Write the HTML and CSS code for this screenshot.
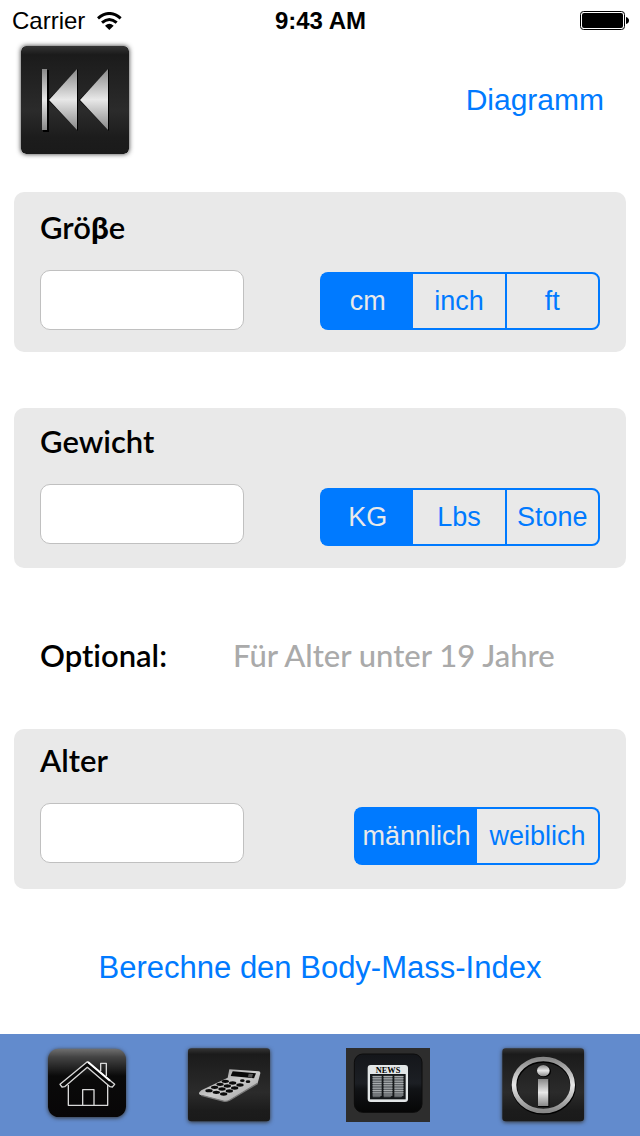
FILE: index.html
```html
<!DOCTYPE html>
<html lang="de">
<head>
    <meta charset="UTF-8">
    <meta name="viewport" content="width=device-width, initial-scale=1.0">
    <title>Body-Mass-Index</title>
    <link rel="stylesheet" href="styles.css">
</head>
<body>
    <div class="status-bar">
        <div class="carrier">
            <span>Carrier</span>
            <svg class="wifi" viewBox="0 0 75 57" aria-hidden="true">
                <g fill="none" stroke="#000" stroke-width="9">
                    <path d="M3 19Q37-10 71 19"/>
                    <path d="M15 32Q37 13 59 32"/>
                </g>
                <path d="M24 41Q37 30 50 41L37 54Z"/>
            </svg>
        </div>
        <span class="clock">9:43 AM</span>
        <svg class="battery" viewBox="0 0 49 20" aria-hidden="true">
            <rect x="0.5" y="0.5" width="44" height="18" rx="3" fill="#fff" stroke="#000"/>
            <rect x="2" y="2" width="41" height="15" rx="2"/>
            <path d="M46 6Q49 7 49 9.500Q49 12 46 13Z"/>
        </svg>
    </div>

    <header class="top-bar">
        <button class="back-button" type="button" aria-label="Zurück">
            <svg viewBox="0 0 108 108" aria-hidden="true">
                <defs>
                    <linearGradient id="tile" x1="0" y1="0" x2="0" y2="1">
                        <stop offset="0" stop-color="#343434"/>
                        <stop offset="0.08" stop-color="#1b1b1b"/>
                        <stop offset="0.6" stop-color="#2b2b2b"/>
                        <stop offset="0.85" stop-color="#1c1c1c"/>
                        <stop offset="1" stop-color="#1a1a1a"/>
                    </linearGradient>
                    <linearGradient id="metal" x1="0" y1="0" x2="0" y2="1">
                        <stop offset="0" stop-color="#888"/>
                        <stop offset="0.5" stop-color="#e8e8e8"/>
                        <stop offset="1" stop-color="#888"/>
                    </linearGradient>
                </defs>
                <rect width="108" height="108" rx="5" fill="url(#tile)"/>
                <g fill="#000">
                    <path d="M22 24H28V86H22Z"/>
                    <path d="M57 23V85L27 54Z"/>
                    <path d="M88 23V85L58 54Z"/>
                </g>
                <g fill="url(#metal)">
                    <path d="M21 23H26V84H21Z"/>
                    <path d="M56 23V84L28 54Z"/>
                    <path d="M87 23V84L59 54Z"/>
                </g>
            </svg>
        </button>
        <button class="link-button" type="button">Diagramm</button>
    </header>

    <main>
        <section class="card card-height">
            <label class="title" for="height">Grö<b>β</b>e</label>
            <div class="field-row">
                <input class="value" id="height" type="text" inputmode="decimal">
                <fieldset class="segments" aria-label="Einheit der Größe">
                    <label class="segment"><input type="radio" name="height-unit" checked><span>cm</span></label>
                    <label class="segment"><input type="radio" name="height-unit"><span>inch</span></label>
                    <label class="segment"><input type="radio" name="height-unit"><span>ft</span></label>
                </fieldset>
            </div>
        </section>

        <section class="card card-weight">
            <label class="title" for="weight">Gewicht</label>
            <div class="field-row">
                <input class="value" id="weight" type="text" inputmode="decimal">
                <fieldset class="segments" aria-label="Einheit des Gewichts">
                    <label class="segment"><input type="radio" name="weight-unit" checked><span>KG</span></label>
                    <label class="segment"><input type="radio" name="weight-unit"><span>Lbs</span></label>
                    <label class="segment"><input type="radio" name="weight-unit"><span>Stone</span></label>
                </fieldset>
            </div>
        </section>

        <div class="optional">
            <span class="title">Optional:</span>
            <span class="hint">Für Alter unter 19 Jahre</span>
        </div>

        <section class="card card-age">
            <label class="title" for="age">Alter</label>
            <div class="field-row">
                <input class="value" id="age" type="text" inputmode="numeric">
                <fieldset class="segments segments-two" aria-label="Geschlecht">
                    <label class="segment"><input type="radio" name="gender" checked><span>männlich</span></label>
                    <label class="segment"><input type="radio" name="gender"><span>weiblich</span></label>
                </fieldset>
            </div>
        </section>

        <button class="link-button calculate" type="button">Berechne den Body-Mass-Index</button>
    </main>

    <nav class="tab-bar">
        <a class="tab" href="#home" aria-label="Start">
            <svg viewBox="45 42 252 222" aria-hidden="true">
                <defs>
                    <linearGradient id="gloss" x1="0" y1="0" x2="0" y2="1">
                        <stop offset="0" stop-color="#707070"/>
                        <stop offset="0.12" stop-color="#444"/>
                        <stop offset="0.4" stop-color="#0a0a0a"/>
                        <stop offset="1" stop-color="#080607"/>
                    </linearGradient>
                </defs>
                <rect x="54" y="44" width="234" height="205" rx="32" fill="url(#gloss)"/>
                <g fill="none" stroke="#d8d8d8" stroke-width="4" stroke-linejoin="round">
                    <path d="M115 153V214H233V153"/>
                    <path d="M158 213V167H192V213"/>
                    <path d="M212 112V88H229V126"/>
                    <path d="M172 83L254 151L247 159L240 158L172 100L104 158L96 159L90 151Z" fill="#080808"/>
                </g>
                <path d="M174 84L240 140" stroke="#fff" stroke-width="6"/>
            </svg>
        </a>
        <a class="tab" href="#calculator" aria-label="Rechner">
            <svg viewBox="51 42 252 222" aria-hidden="true">
                <defs>
                    <linearGradient id="silver" x1="0" y1="0" x2="1" y2="1">
                        <stop offset="0" stop-color="#888"/>
                        <stop offset="0.5" stop-color="#ccc"/>
                        <stop offset="1" stop-color="#999"/>
                    </linearGradient>
                </defs>
                <rect x="54" y="43" width="246" height="219" rx="10" fill="url(#tile)"/>
                <path d="M178 106L266 112Q272 113 271 118L263 148L180 198Q172 203 163 202L94 184Q84 181 88 175L94 169L173 131Z" fill="url(#silver)"/>
                <path d="M263 148L180 198Q172 203 163 202L94 184" fill="none" stroke="#777" stroke-width="4"/>
                <path d="M188 112L258 118L252 133L182 126Z" fill="#090909"/>
                <path d="M236 119L249 120L246 131L234 129Z" fill="#555"/>
                <g fill="#0b0b0b">
                    <ellipse cx="166" cy="142" rx="11" ry="5"/>
                    <ellipse cx="188" cy="147" rx="11" ry="5"/>
                    <ellipse cx="210" cy="153" rx="11" ry="5"/>
                    <ellipse cx="150" cy="151" rx="11" ry="5"/>
                    <ellipse cx="172" cy="156" rx="11" ry="5"/>
                    <ellipse cx="194" cy="162" rx="11" ry="5"/>
                    <ellipse cx="134" cy="160" rx="11" ry="5"/>
                    <ellipse cx="156" cy="165" rx="11" ry="5"/>
                    <ellipse cx="178" cy="171" rx="11" ry="5"/>
                    <ellipse cx="117" cy="170" rx="11" ry="5"/>
                    <ellipse cx="139" cy="175" rx="11" ry="5"/>
                    <ellipse cx="161" cy="180" rx="11" ry="5"/>
                    <ellipse cx="217" cy="140" rx="7" ry="4"/>
                    <ellipse cx="234" cy="143" rx="7" ry="4"/>
                </g>
            </svg>
        </a>
        <a class="tab tab-flat" href="#news" aria-label="News">
            <svg viewBox="48 42 252 222" aria-hidden="true">
                <defs>
                    <linearGradient id="night" x1="0" y1="0" x2="0" y2="1">
                        <stop offset="0" stop-color="#14161a"/>
                        <stop offset="0.5" stop-color="#1c1f24"/>
                        <stop offset="0.6" stop-color="#111316"/>
                        <stop offset="1" stop-color="#060606"/>
                    </linearGradient>
                </defs>
                <rect x="48" y="42" width="252" height="222" fill="#2d2d2d"/>
                <rect x="73" y="60" width="203" height="175" rx="25" fill="url(#night)" stroke="#0c0c0c" stroke-width="3"/>
                <rect x="113" y="93" width="121" height="111" rx="9" fill="#e2e6e7"/>
                <rect x="120" y="120" width="107" height="76" fill="#15181a"/>
                <text class="paper-name" x="174" y="116">NEWS</text>
                <g fill="#606467">
                    <path d="M128 125H155V184L149 190H128Z"/>
                    <path d="M161 125H187V184L181 190H161Z"/>
                    <path d="M193 125H220V184L214 190H193Z"/>
                </g>
                <g stroke="#a8acae" stroke-width="27" stroke-dasharray="3 4">
                    <path d="M141 126V184"/>
                    <path d="M174 126V184"/>
                    <path d="M207 126V184"/>
                </g>
            </svg>
        </a>
        <a class="tab" href="#info" aria-label="Info">
            <svg viewBox="48 42 252 222" aria-hidden="true">
                <rect x="52" y="43" width="245" height="219" rx="10" fill="url(#tile)"/>
                <g fill="none">
                    <ellipse cx="176" cy="156" rx="88" ry="78" stroke="#000" stroke-width="17"/>
                    <ellipse cx="175" cy="153" rx="88" ry="78" stroke="url(#metal)" stroke-width="14"/>
                </g>
                <g fill="#000">
                    <ellipse cx="177" cy="112" rx="21" ry="18"/>
                    <path d="M159 136H193V219H159Z"/>
                </g>
                <g fill="url(#metal)">
                    <ellipse cx="175" cy="110" rx="19" ry="17"/>
                    <path d="M159 135H190V216H159Z"/>
                </g>
            </svg>
        </a>
    </nav>
</body>
</html>
```
FILE: styles.css
```css
* {
    box-sizing: border-box;
}

body {
    display: flex;
    flex-direction: column;
    min-height: 100vh;
    margin: 0;
    background: #fff;
    color: #000;
    font-family: "Liberation Sans", Arial, sans-serif;
    font-size: 27px;
}

button {
    padding: 0;
    border: none;
    background: none;
    cursor: pointer;
}

svg {
    display: block;
}

/* status bar */
.status-bar {
    display: grid;
    grid-template-columns: 1fr auto 1fr;
    align-items: center;
    height: 40px;
    padding: 2px 11px 0 12px;
    font-size: 24px;
    line-height: 38px;
}

.carrier {
    display: flex;
    align-items: center;
    gap: 12px;
}

.wifi {
    width: 25px;
    height: 19px;
}

.clock {
    font-weight: bold;
}

.battery {
    justify-self: end;
    width: 49px;
    height: 20px;
}

/* header */
.top-bar {
    display: flex;
    align-items: center;
    justify-content: space-between;
    height: 120px;
    margin-bottom: 32px;
    padding: 0 36px 0 21px;
}

.back-button svg {
    width: 108px;
    height: 108px;
    border-radius: 5px;
    box-shadow: 0 0 5px #333;
}

.link-button {
    color: #007aff;
    font-family: inherit;
    font-size: 30px;
    line-height: 36px;
}

/* input cards */
.card {
    display: flex;
    flex-direction: column;
    gap: 26px;
    margin: 0 14px;
    border-radius: 10px;
    background: #e9e9e9;
}

.card-height {
    margin-bottom: 56px;
    padding: 18px 26px 22px;
}

.card-weight {
    padding: 16px 26px 22px;
}

.card-age {
    padding: 14px 26px 24px;
}

.title,
.hint {
    font-family: Lato, sans-serif;
    font-size: 31px;
    font-variant-ligatures: none;
    font-weight: 600;
    line-height: 34px;
}

.hint {
    color: #aaa;
    font-weight: 500;
}

.field-row {
    display: flex;
    justify-content: space-between;
}

.card-weight .field-row,
.card-age .field-row {
    min-height: 62px;
}

.value {
    width: 204px;
    height: 60px;
    padding: 0 14px;
    border: 1px solid #c0c0c0;
    border-radius: 10px;
    background: #fff;
    font: inherit;
}

.segments {
    display: flex;
    align-self: flex-end;
    width: 280px;
    height: 58px;
    margin: 0;
    padding: 0;
    border: none;
}

.segments-two {
    width: 246px;
}

.segment {
    display: flex;
    flex: 1 1 0;
    align-items: center;
    justify-content: center;
    min-width: 0;
    border: 2px solid #007aff;
    border-right: none;
    color: #007aff;
    line-height: 54px;
    cursor: pointer;
}

.segment:first-child {
    border-radius: 8px 0 0 8px;
}

.segment:last-child {
    border-right: 2px solid #007aff;
    border-radius: 0 8px 8px 0;
}

.segment:has(input:checked) {
    background: #007aff;
    color: #e9e9e9;
}

.segment:has(input:checked) + .segment {
    border-left: none;
}

.segment input {
    width: 0;
    height: 0;
    margin: 0;
    appearance: none;
}

.optional {
    display: flex;
    align-items: center;
    gap: 66px;
    padding: 70px 40px 57px;
}

.calculate {
    display: block;
    margin: 61px auto 48px;
    font-size: 31px;
}

/* bottom tabs */
.tab-bar {
    display: grid;
    grid-template-columns: 174fr 110fr 208fr 102fr 46fr;
    justify-items: center;
    margin-top: auto;
    padding: 14px 0;
    background: #628bcd;
}

.tab svg {
    width: 84px;
    height: 74px;
    filter: drop-shadow(0 1px 2px #333);
}

.tab-flat svg {
    filter: none;
}

.paper-name {
    font-family: "Liberation Serif", serif;
    font-size: 25px;
    font-weight: bold;
    text-anchor: middle;
}
```
